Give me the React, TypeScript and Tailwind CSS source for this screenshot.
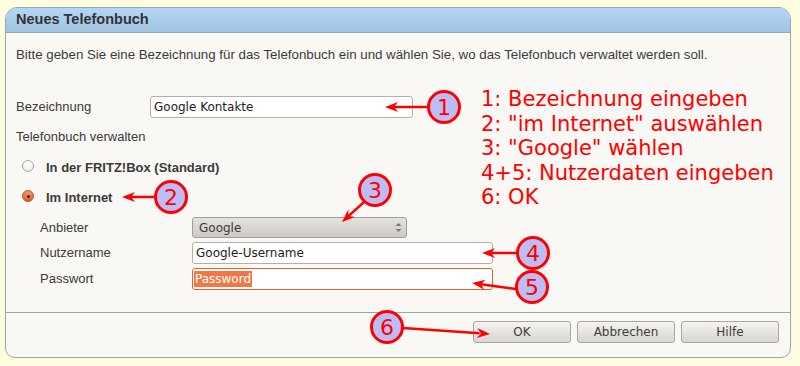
import React from 'react';

type Pt = [number, number];

// arrow from circle edge to tip, with a notched head
const arrowHead = (from: Pt, to: Pt) => {
  const [x1, y1] = from;
  const [x2, y2] = to;
  const len = Math.hypot(x2 - x1, y2 - y1);
  const ux = (x2 - x1) / len;
  const uy = (y2 - y1) / len;
  const px = -uy;
  const py = ux;
  const back = 13;
  const half = 5;
  const notch = 9;
  const bx = x2 - ux * back;
  const by = y2 - uy * back;
  const nx = x2 - ux * notch;
  const ny = y2 - uy * notch;
  return `${x2},${y2} ${bx + px * half},${by + py * half} ${nx},${ny} ${bx - px * half},${by - py * half}`;
};

const markers: { n: string; c: Pt; from: Pt; to: Pt }[] = [
  { n: '1', c: [444, 107], from: [428, 107], to: [385, 107] },
  { n: '2', c: [171, 197], from: [155, 197], to: [122, 197] },
  { n: '3', c: [375, 190], from: [364, 202], to: [342, 222] },
  { n: '4', c: [533, 253], from: [517, 253], to: [482, 253] },
  { n: '5', c: [532, 287], from: [516, 289], to: [472, 283] },
  { n: '6', c: [387, 327], from: [403, 328], to: [490, 334] },
];

const steps = [
  '1: Bezeichnung eingeben',
  '2: "im Internet" auswählen',
  '3: "Google" wählen',
  '4+5: Nutzerdaten eingeben',
  '6: OK',
];

const Radio: React.FC<{ checked?: boolean }> = ({ checked }) =>
  checked ? (
    <span className="w-[12px] h-[12px] rounded-full border border-[#b5522e] bg-gradient-to-b from-[#f29a72] to-[#de5a2c] flex items-center justify-center shrink-0">
      <span className="w-[3px] h-[3px] rounded-full bg-[#4b2418]" />
    </span>
  ) : (
    <span className="w-[12px] h-[12px] rounded-full border border-[#a9a6a1] bg-gradient-to-b from-[#ffffff] to-[#eeece9] shrink-0" />
  );

const Btn: React.FC<{ label: string }> = ({ label }) => (
  <button className="w-[98px] h-[22px] rounded-[3px] border border-[#a9a5a0] bg-gradient-to-b from-[#f4f3f1] to-[#d9d6d1] text-[12px] text-[#3c3c3c] font-['DejaVu_Sans',sans-serif] flex items-center justify-center">
    {label}
  </button>
);

export default function App() {
  return (
    <div className="w-[800px] h-[366px] bg-[#fffde0] relative overflow-hidden font-['Liberation_Sans',Arial,sans-serif] text-[#3b3b3b]">
      <div className="ml-[5px] mt-[7px] w-[786px] h-[351px] border border-[#94aaa8] rounded-t-[12px] rounded-b-[10px] bg-[#f9f8f4] flex flex-col overflow-hidden">
        {/* Title */}
        <div className="h-[25px] shrink-0 border-b border-[#94aaa8] bg-gradient-to-b from-[#b4d5f5] to-[#a2c5e4] flex items-center pl-[10px]">
          <span className="text-[14.5px] font-bold text-[#333]">Neues Telefonbuch</span>
        </div>

        {/* Body */}
        <div className="flex-1 pl-[10px] pt-[14px] text-[13px]">
          <p className="h-[15px] leading-[15px] text-[13.3px]">
            Bitte geben Sie eine Bezeichnung für das Telefonbuch ein und wählen Sie, wo das Telefonbuch verwaltet werden soll.
          </p>

          <div className="mt-[34px] flex items-center h-[22px]">
            <span className="w-[134px]">Bezeichnung</span>
            <div className="w-[263px] h-[22px] rounded-[3px] border border-[#b3afa9] bg-white flex items-center pl-[3px] text-[12px] text-[#222] font-['DejaVu_Sans',sans-serif]">
              Google Kontakte
            </div>
          </div>

          <p className="mt-[11px] h-[15px] leading-[15px]">Telefonbuch verwalten</p>

          <div className="mt-[12px] h-[20px] flex items-center pl-[6px] gap-[12px]">
            <Radio />
            <span className="font-bold mt-[3px]">In der FRITZ!Box (Standard)</span>
          </div>
          <div className="mt-[10px] h-[20px] flex items-center pl-[6px] gap-[12px]">
            <Radio checked />
            <span className="font-bold mt-[3px]">Im Internet</span>
          </div>

          <div className="pl-[24px] mt-[11px]">
            <div className="flex items-center h-[21px]">
              <span className="w-[152px]">Anbieter</span>
              <div className="w-[215px] h-[21px] rounded-[3px] border border-[#a19d98] bg-gradient-to-b from-[#e4e2de] to-[#cdcac5] flex items-center justify-between pl-[6px] pr-[4px] text-[12px] text-[#3a3a3a] font-['DejaVu_Sans',sans-serif]">
                Google
                <svg width="7" height="11" viewBox="0 0 7 11">
                  <path d="M3.5 1 L6.5 4 L0.5 4 Z" fill="#7a7874" />
                  <path d="M3.5 10 L6.5 7 L0.5 7 Z" fill="#7a7874" />
                </svg>
              </div>
            </div>
            <div className="flex items-center h-[22px] mt-[4px]">
              <span className="w-[152px]">Nutzername</span>
              <div className="w-[301px] h-[22px] rounded-[3px] border border-[#b3afa9] bg-white flex items-center pl-[3px] text-[12px] text-[#222] font-['DejaVu_Sans',sans-serif]">
                Google-Username
              </div>
            </div>
            <div className="flex items-center h-[22px] mt-[4px]">
              <span className="w-[152px]">Passwort</span>
              <div className="w-[301px] h-[22px] rounded-[3px] border border-[#e2602c] bg-white flex items-center pl-[1px] text-[12px] font-['DejaVu_Sans',sans-serif]">
                <span className="bg-[#f07848] text-white px-[1px] leading-[16px]">Password</span>
              </div>
            </div>
          </div>
        </div>

        {/* Footer */}
        <div className="h-[45px] shrink-0 border-t border-[#94aaa8] flex justify-end items-start pt-[8px] pr-[11px] gap-[6px]">
          <Btn label="OK" />
          <Btn label="Abbrechen" />
          <Btn label="Hilfe" />
        </div>
      </div>

      {/* Annotations */}
      <svg className="absolute inset-0 pointer-events-none" width="800" height="366" viewBox="0 0 800 366">
        {markers.map((m) => (
          <g key={m.n}>
            <line x1={m.from[0]} y1={m.from[1]} x2={m.to[0] - (m.to[0] - m.from[0]) * 0.12} y2={m.to[1] - (m.to[1] - m.from[1]) * 0.12} stroke="#ff0000" strokeWidth="2.5" />
            <polygon points={arrowHead(m.from, m.to)} fill="#ff0000" />
            <circle cx={m.c[0]} cy={m.c[1]} r="15.5" fill="#bdbdf6" stroke="#ff0000" strokeWidth="3" />
            <text x={m.c[0]} y={m.c[1] + 8} textAnchor="middle" fontSize="22" fill="#ff0000" fontFamily="DejaVu Sans, sans-serif">
              {m.n}
            </text>
          </g>
        ))}
      </svg>

      <div className="absolute left-[481px] top-[87px] text-[21px] leading-[24.5px] text-[#ff0000] font-['DejaVu_Sans',sans-serif] whitespace-nowrap">
        {steps.map((s) => (
          <div key={s}>{s}</div>
        ))}
      </div>
    </div>
  );
}
